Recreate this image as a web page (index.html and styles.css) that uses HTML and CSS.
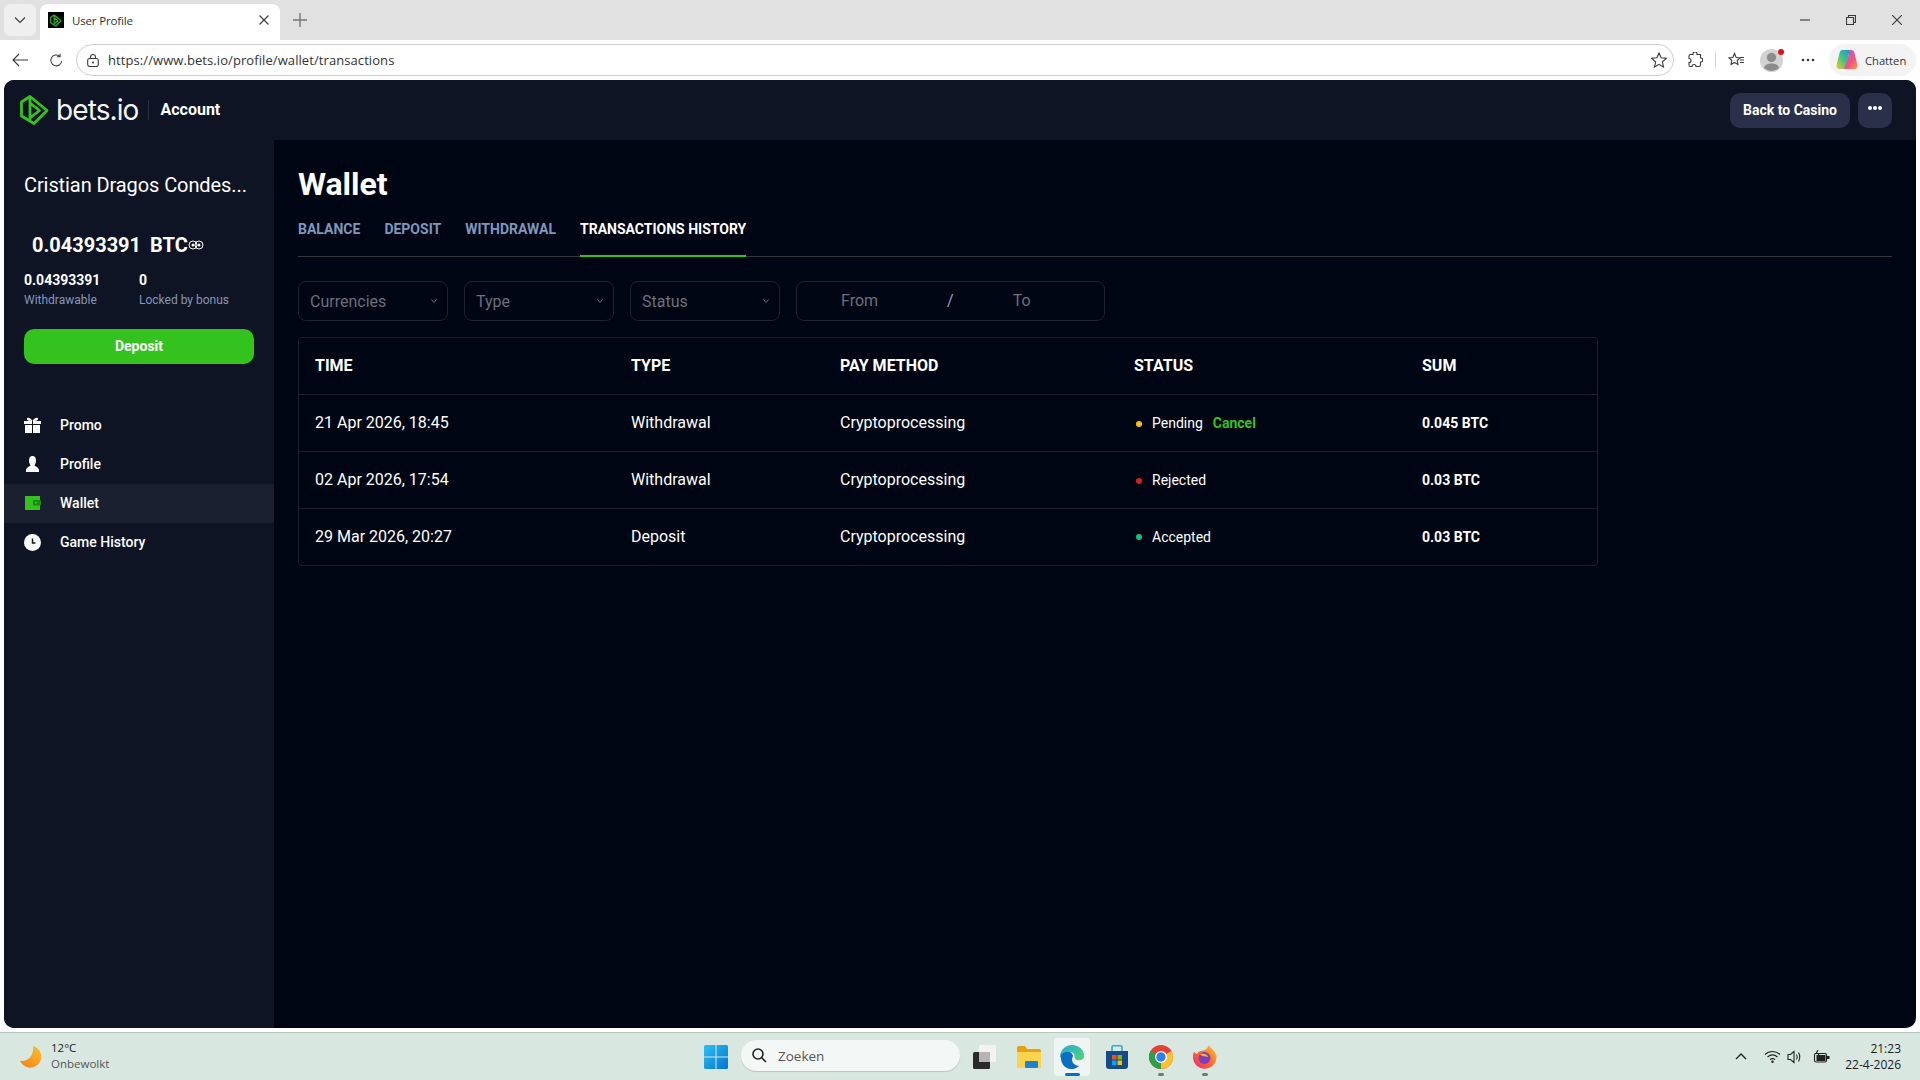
FILE: index.html
```html
<!DOCTYPE html>
<html lang="en">
<head>
<meta charset="utf-8">
<title>User Profile</title>
<link rel="stylesheet" href="styles.css">
</head>
<body>
<div class="tabstrip">
  <div class="tab-menu"><svg width="12" height="8" viewBox="0 0 12 8"><path d="M1 1.500 6 6.500 11 1.500" class="ic"/></svg></div>
  <div class="tab">
    <span class="favicon"><svg width="12" height="13" viewBox="0 0 29 32"><path d="M1.500 8V22L14 29.500 27 16.500 10 2.500ZM10 3V26M10 9 19.500 16.500 10 24" class="ic-green-s"/></svg></span>
    <span class="tab-title">User Profile</span>
    <svg class="tab-close" width="10" height="10" viewBox="0 0 10 10"><path d="M.5.5 9.500 9.500M9.500.5.5 9.500" class="ic"/></svg>
  </div>
  <svg class="tab-new" width="14" height="14" viewBox="0 0 14 14"><path d="M7 0V14M0 7H14" class="ic-grey"/></svg>
  <div class="winctl">
    <svg width="10" height="10" viewBox="0 0 10 10"><path d="M0 5H10" class="ic"/></svg>
    <svg width="10" height="10" viewBox="0 0 10 10"><path d="M.5 2.500H7.500V9.500H.5ZM2.500 2.500V.5H9.500V7.500H7.500" class="ic"/></svg>
    <svg width="10" height="10" viewBox="0 0 10 10"><path d="M0 0 10 10M10 0 0 10" class="ic"/></svg>
  </div>
</div>
<div class="toolbar">
  <svg class="tb-back" width="16" height="14" viewBox="0 0 16 14"><path d="M16 7H1M7 1 1 7 7 13" class="ic"/></svg>
  <svg class="tb-reload" width="15" height="15" viewBox="0 0 16 16"><path d="M13.500 8.500A5.800 5.800 0 1 1 11.500 3.500M11.800 .8V4H8.600" class="ic"/></svg>
  <div class="urlbar">
    <svg width="12" height="13" viewBox="0 0 12 13"><rect x=".7" y="4.500" width="10.600" height="8" rx="2" class="ic"/><path d="M3.500 4.500V3A2.500 2.500 0 0 1 8.500 3V4.500" class="ic"/><circle cx="6" cy="8.500" r="1" fill="#333"/></svg>
    <span class="url">https://www.bets.io/profile/wallet/transactions</span>
    <svg class="url-star" width="16" height="16" viewBox="0 0 16 16"><path d="M8 1 10.100 5.800 15.300 6.300 11.400 9.800 12.500 15 8 12.300 3.500 15 4.600 9.800 .7 6.300 5.900 5.800Z" class="ic"/></svg>
  </div>
  <svg class="tb-ext" width="16" height="16" viewBox="0 0 16 16"><path d="M6 1.500A2 2 0 0 1 10 2.500H13.500V6A2 2 0 0 1 14 10H13.500V13A1.500 1.500 0 0 1 12 14.500H9A2 2 0 0 0 5 14.500H3.500A1.500 1.500 0 0 1 2 13V10.500A2 2 0 0 0 2 6.500V4A1.500 1.500 0 0 1 3.500 2.500H6Z" class="ic"/></svg>
  <span class="tb-sep"></span>
  <svg class="tb-fav" width="17" height="16" viewBox="0 0 17 16"><path d="M6.500 1.500 8.200 5.500 12 5.900 9.200 8.500 10 12.500 6.500 10.500 3 12.500 3.800 8.500 1 5.900 4.800 5.500Z" class="ic"/><path d="M12 8H16M12 10.500H16M12 5.500H16" class="ic"/></svg>
  <span class="avatar"><svg width="23" height="23" viewBox="0 0 23 23"><circle cx="11.500" cy="11.500" r="11.500" fill="#d2d2d2"/><circle cx="11.500" cy="8.500" r="4.700" fill="#8c8c8c"/><path d="M4 19C5 15.500 8 14.500 11.500 14.500S18 15.500 19 19A11 11 0 0 1 4 19Z" fill="#8c8c8c"/></svg><i class="avatar-dot"></i></span>
  <svg class="tb-more" width="14" height="4" viewBox="0 0 14 4"><circle cx="2" cy="2" r="1.300" fill="#333"/><circle cx="7" cy="2" r="1.300" fill="#333"/><circle cx="12" cy="2" r="1.300" fill="#333"/></svg>
  <div class="chat">
    <svg width="22" height="22" viewBox="0 0 22 22"><defs><linearGradient id="cpa" x1="0" y1="1" x2="1" y2="0"><stop offset="0" stop-color="#ffc233"/><stop offset=".5" stop-color="#3cc77c"/><stop offset="1" stop-color="#1f8fe0"/></linearGradient><linearGradient id="cpb" x1="0" y1="0" x2="1" y2="1"><stop offset="0" stop-color="#b45bd9"/><stop offset=".6" stop-color="#f0567b"/><stop offset="1" stop-color="#ff9a3c"/></linearGradient></defs><path d="M6 1H14L9 20H4C1 20 0 18 .7 15.500L3.500 4C4 2 5 1 6 1Z" fill="url(#cpa)"/><path d="M13 1H15C17 1 18 2 18.500 4L21.300 15.500C22 18 21 20 18 20H8L13 5Z" fill="url(#cpb)"/></svg>
    <span>Chatten</span>
  </div>
</div>

<div class="page">
  <header class="site-head">
    <svg class="logo" width="29" height="32" viewBox="0 0 29 32"><path d="M1.500 8V22L14 29.500 27 16.500 10 2.500ZM10 3V26M10 9 19.500 16.500 10 24" class="logo-s"/></svg>
    <span class="brand">bets.io</span>
    <span class="head-sep"></span>
    <span class="head-title">Account</span>
    <div class="head-actions">
      <button class="btn-dark">Back to Casino</button>
      <button class="btn-more"><svg width="14" height="4" viewBox="0 0 14 4"><circle cx="2" cy="2" r="2" fill="#fff"/><circle cx="7" cy="2" r="2" fill="#fff"/><circle cx="12" cy="2" r="2" fill="#fff"/></svg></button>
    </div>
  </header>
  <div class="body">
    <aside class="side">
      <div class="user">Cristian Dragos Condes...</div>
      <div class="balance"><span>0.04393391</span><span class="bal-cur">BTC</span>
        <svg width="16" height="10" viewBox="0 0 16 10"><circle cx="5" cy="5" r="4" class="ic-white"/><circle cx="11" cy="5" r="4" class="ic-white"/><circle cx="5" cy="5" r="1.500" fill="#fff"/><circle cx="11" cy="5" r="1.500" fill="#fff"/></svg>
      </div>
      <div class="bal-split">
        <div class="bal-col"><b>0.04393391</b><small>Withdrawable</small></div>
        <div class="bal-col"><b>0</b><small>Locked by bonus</small></div>
      </div>
      <button class="btn-deposit">Deposit</button>
      <nav class="nav">
        <a class="nav-item"><svg width="17" height="16" viewBox="0 0 17 16"><path d="M0 4H8V7H0ZM9 4H17V7H9ZM1 8H8V16H1ZM9 8H16V16H9Z" fill="#fff"/><path d="M8.500 4C6 0 2.500 0 3 2.500 3.500 4 6 4 8.500 4 11 4 13.500 4 14 2.500 14.500 0 11 0 8.500 4Z" fill="#fff"/></svg><span>Promo</span></a>
        <a class="nav-item"><svg width="17" height="16" viewBox="0 0 17 16"><path d="M8.500 0C11 0 12 2 12 4.500 12 7 11 8 10.500 9.500 11 10.500 15 11 15 14.500V16H2V14.500C2 11 6 10.500 6.500 9.500 6 8 5 7 5 4.500 5 2 6 0 8.500 0Z" fill="#fff"/></svg><span>Profile</span></a>
        <a class="nav-item active"><svg width="17" height="16" viewBox="0 0 17 16"><path d="M1 1H16V15H1Z" fill="#34c21f"/><rect x="9" y="5" width="8" height="5.500" rx="1" fill="#1f8a12"/><rect x="11" y="7" width="2" height="1.500" fill="#34c21f"/></svg><span>Wallet</span></a>
        <a class="nav-item"><svg width="17" height="17" viewBox="0 0 17 17"><circle cx="8.500" cy="8.500" r="8.500" fill="#fff"/><path d="M8.500 4.500V9H11.500" class="ic-navy"/></svg><span>Game History</span></a>
      </nav>
    </aside>
    <main class="main">
      <h1 class="title">Wallet</h1>
      <div class="tabs">
        <a class="tabs-item">Balance</a>
        <a class="tabs-item">Deposit</a>
        <a class="tabs-item">Withdrawal</a>
        <a class="tabs-item current">Transactions history</a>
      </div>
      <div class="filters">
        <div class="select"><span>Currencies</span><svg width="6" height="4" viewBox="0 0 6 4"><path d="M.5.5 3 3.500 5.500.5" class="ic-dim"/></svg></div>
        <div class="select"><span>Type</span><svg width="6" height="4" viewBox="0 0 6 4"><path d="M.5.5 3 3.500 5.500.5" class="ic-dim"/></svg></div>
        <div class="select"><span>Status</span><svg width="6" height="4" viewBox="0 0 6 4"><path d="M.5.5 3 3.500 5.500.5" class="ic-dim"/></svg></div>
        <div class="daterange"><span class="d-from">From</span><span class="d-sep">/</span><span class="d-to">To</span></div>
      </div>
      <table class="tx">
        <colgroup><col class="c1"><col class="c2"><col class="c3"><col class="c4"><col class="c5"></colgroup>
        <thead><tr><th>TIME</th><th>TYPE</th><th>PAY METHOD</th><th>STATUS</th><th>SUM</th></tr></thead>
        <tbody>
          <tr><td>21 Apr 2026, 18:45</td><td>Withdrawal</td><td>Cryptoprocessing</td><td class="st"><i class="dot pending"></i>Pending<a class="cancel">Cancel</a></td><td class="sum">0.045 BTC</td></tr>
          <tr><td>02 Apr 2026, 17:54</td><td>Withdrawal</td><td>Cryptoprocessing</td><td class="st"><i class="dot rejected"></i>Rejected</td><td class="sum">0.03 BTC</td></tr>
          <tr><td>29 Mar 2026, 20:27</td><td>Deposit</td><td>Cryptoprocessing</td><td class="st"><i class="dot accepted"></i>Accepted</td><td class="sum">0.03 BTC</td></tr>
        </tbody>
      </table>
    </main>
  </div>
</div>

<footer class="taskbar">
  <div class="tb-left">
    <svg width="24" height="24" viewBox="0 0 24 24"><defs><linearGradient id="moon" x1="1" y1="0" x2="0" y2="1"><stop offset="0" stop-color="#fbc02d"/><stop offset="1" stop-color="#f57f17"/></linearGradient></defs><path d="M14 1A11 11 0 1 1 1 15.500C7 17.500 15.500 12 14 1Z" fill="url(#moon)"/></svg>
    <div class="weather"><span>12°C</span><span class="w-sub">Onbewolkt</span></div>
  </div>
  <div class="tb-center">
    <svg class="win" width="24" height="24" viewBox="0 0 24 24"><defs><linearGradient id="wn" x1="0" y1="0" x2="1" y2="1"><stop offset="0" stop-color="#2cc1f5"/><stop offset="1" stop-color="#0672cf"/></linearGradient></defs><path d="M0 1.500Q0 0 1.500 0H11.500V11.500H0ZM12.500 0H22.500Q24 0 24 1.500V11.500H12.500ZM0 12.500H11.500V24H1.500Q0 24 0 22.500ZM12.500 12.500H24V22.500Q24 24 22.500 24H12.500Z" fill="url(#wn)"/></svg>
    <div class="search"><svg width="15" height="15" viewBox="0 0 15 15"><circle cx="6" cy="6" r="5" class="ic-search"/><path d="M9.700 9.700 14 14" class="ic-search"/></svg><span>Zoeken</span></div>
    <svg class="app app-task" width="24" height="24" viewBox="0 0 24 24"><rect x="0" y="7" width="17" height="17" rx="1.500" fill="#2a2a2a"/><rect x="6" y="0" width="17" height="17" rx="1.500" fill="#f3f3f3"/><rect x="6" y="7" width="11" height="10" fill="#b5b5b5"/></svg>
    <svg class="app app-files" width="24" height="22" viewBox="0 0 24 22"><path d="M0 2Q0 0 2 0H8L10 3H22Q24 3 24 5V20Q24 22 22 22H2Q0 22 0 20Z" fill="#e3a20f"/><path d="M0 6H24V20Q24 22 22 22H2Q0 22 0 20Z" fill="#fcd34d"/><rect x="8" y="15" width="13" height="7" rx="1" fill="#1f7fd1"/></svg>
    <div class="app-active"><svg width="24" height="24" viewBox="0 0 24 24"><defs><linearGradient id="edg" x1="0" y1="0" x2="1" y2="1"><stop offset="0" stop-color="#2aa5e0"/><stop offset="1" stop-color="#50d96c"/></linearGradient></defs><path d="M12 0C19 0 24 5 24 11 24 15 20 16 17 15 14 14 15 11 14 9 12 6 5 8 4 12 1 14 0 12 0 11 1 4 6 0 12 0Z" fill="url(#edg)"/><path d="M1 10C3 6 12 5 13 11 11 15 12 20 19 21 16 23.500 14 24 11.500 24 4 24 0 17 1 10Z" fill="#0a6ec2"/></svg><i class="app-bar"></i></div>
    <svg class="app app-store" width="24" height="24" viewBox="0 0 24 24"><path d="M7 6V2Q7 .8 8.500 .8H15.500Q17 .8 17 2V6" class="ic-store"/><path d="M1 6H23V21Q23 24 20 24H4Q1 24 1 21Z" fill="#164a85"/><rect x="7" y="10" width="4.500" height="4.500" fill="#f25022"/><rect x="12.500" y="10" width="4.500" height="4.500" fill="#7fba00"/><rect x="7" y="15.500" width="4.500" height="4.500" fill="#00a4ef"/><rect x="12.500" y="15.500" width="4.500" height="4.500" fill="#ffb900"/></svg>
    <div class="app-run"><svg width="24" height="24" viewBox="0 0 24 24"><circle cx="12" cy="12" r="12" fill="#e34133"/><path d="M12 12 22.400 6A12 12 0 0 1 12 24Z" fill="#fbc02d"/><path d="M12 12 12 24A12 12 0 0 1 1.600 6Z" fill="#2e9e48"/><circle cx="12" cy="12" r="6" fill="#fff"/><circle cx="12" cy="12" r="4.700" fill="#2f80ed"/></svg><i class="app-dot"></i></div>
    <div class="app-run"><svg width="24" height="24" viewBox="0 0 24 24"><defs><linearGradient id="ffx" x1="1" y1="0" x2="0" y2="1"><stop offset="0" stop-color="#ffcb2e"/><stop offset=".5" stop-color="#ff6a2c"/><stop offset="1" stop-color="#e8267a"/></linearGradient></defs><path d="M16 0C17 3 22 5 23.500 11A11.800 11.800 0 1 1 1 7L4 9C6 5 10 6 12 5 14 4 15 2 16 0Z" fill="url(#ffx)"/><circle cx="11.500" cy="13" r="6" fill="#7c3fb8"/><path d="M7 9C10 8 15 9 15 12 12 11 9 12 7 9Z" fill="#ffb02e"/></svg><i class="app-dot"></i></div>
  </div>
  <div class="tb-right">
    <svg class="tray-up" width="12" height="7" viewBox="0 0 12 7"><path d="M1 6 6 1 11 6" class="ic-tray"/></svg>
    <svg class="tray-wifi" width="17" height="13" viewBox="0 0 17 13"><path d="M1 4.500C5 .5 12 .5 16 4.500M3.500 7C6.500 4.500 10.500 4.500 13.500 7M6 9.500C7.500 8.500 9.500 8.500 11 9.500" class="ic-tray-thin"/><circle cx="8.500" cy="11.700" r="1.200" fill="#222"/></svg>
    <svg class="tray-vol" width="16" height="14" viewBox="0 0 16 14"><path d="M1 4.500H3.500L7 1.500V12.500L3.500 9.500H1ZM9.500 4.500Q11 7 9.500 9.500M11.500 2.500Q14 7 11.500 11.500" class="ic-tray-thin"/></svg>
    <svg class="tray-batt" width="17" height="13" viewBox="0 0 17 13"><rect x="1.500" y="3.500" width="12" height="8.500" rx="1.500" class="ic-tray-thin"/><rect x="3.500" y="5" width="9" height="6" fill="#222"/><rect x="14" y="6" width="2.500" height="3" fill="#222"/><path d="M5 0 3 3.500H6L4.500 6.500" class="ic-tray-thin"/></svg>
    <div class="clock"><span>21:23</span><span>22-4-2026</span></div>
  </div>
</footer>
</body>
</html>
```
FILE: styles.css
```css
* { box-sizing: border-box; }
html, body { margin: 0; height: 100%; }
body { width: 1920px; height: 1080px; overflow: hidden; background: #fff; display: flex; flex-direction: column; font-family: Roboto, "Liberation Sans", sans-serif; color: #fff; }

.ic { fill: none; stroke: #3a3a3a; stroke-width: 1.1; }
.ic-grey { fill: none; stroke: #777; stroke-width: 1.4; }
.ic-green-s { fill: none; stroke: #2fae1e; stroke-width: 3; stroke-linejoin: round; }
.ic-white { fill: none; stroke: #fff; stroke-width: 1; }
.ic-navy { fill: none; stroke: #0e1424; stroke-width: 1.5; }
.ic-dim { fill: none; stroke: #6a707c; stroke-width: 1; }
.ic-search { fill: none; stroke: #222; stroke-width: 1.6; }
.ic-store { fill: none; stroke: #2aa8e0; stroke-width: 1.6; }
.ic-tray { fill: none; stroke: #222; stroke-width: 1.4; }
.ic-tray-thin { fill: none; stroke: #222; stroke-width: 1.1; }

/* browser chrome */
.tabstrip { height: 40px; flex: none; background: #e1e1e1; display: flex; align-items: flex-end; padding-left: 4px; }
.tab-menu { width: 32px; height: 32px; margin-bottom: 4px; background: #efefef; border-radius: 6px; display: flex; align-items: center; justify-content: center; }
.tab { width: 240px; height: 36px; margin-left: 4px; background: #fff; border-radius: 8px 8px 0 0; display: flex; align-items: center; padding: 0 0 4px 8px; }
.favicon { width: 16px; height: 16px; background: #000; display: flex; align-items: center; justify-content: center; }
.tab-title { margin-left: 8px; font: 11.500px "Open Sans", sans-serif; letter-spacing: -.15px; color: #333; flex: 1; }
.tab-close { margin-right: 11px; }
.tab-new { margin: 0 0 13px 13px; }
.winctl { margin-left: auto; height: 40px; padding: 15px 18px 0 0; display: flex; gap: 36px; }
.toolbar { height: 40px; flex: none; background: #fff; display: flex; align-items: center; padding-left: 12px; }
.tb-reload { margin-left: 21px; }
.urlbar { width: 1598px; height: 32px; margin-left: 12px; border: 1px solid #cfcfcf; border-radius: 16px; display: flex; align-items: center; padding: 0 6px 0 10px; }
.url { margin-left: 9px; font: 13px "Open Sans", sans-serif; color: #333; letter-spacing: .08px; }
.url-star { margin-left: auto; }
.tb-ext { margin-left: 13px; }
.tb-sep { width: 1px; height: 16px; background: #d5d5d5; margin-left: 12px; }
.tb-fav { margin-left: 12px; }
.avatar { position: relative; display: block; width: 23px; height: 23px; margin-left: 15px; }
.avatar svg { display: block; }
.avatar-dot { position: absolute; right: -1px; top: 0; width: 6px; height: 6px; border-radius: 50%; background: #e0101c; }
.tb-more { margin-left: 18px; }
.chat { width: 87px; height: 32px; margin-left: 14px; background: #f3f3f3; border-radius: 16px; display: flex; align-items: center; padding-left: 7px; gap: 7px; font: 11.200px "Open Sans", sans-serif; color: #333; }

/* page */
.page { width: 1912px; height: 948px; margin: 0 4px; flex: none; background: #000514; border-radius: 10px; overflow: hidden; display: flex; flex-direction: column; }
.site-head { height: 60px; flex: none; background: #0e1424; display: flex; align-items: center; padding-left: 16px; }
.brand { margin-left: 7px; font: 400 28px Inter, sans-serif; letter-spacing: -.9px; color: #f4f4f4; }
.logo-s { fill: none; stroke: #34c21f; stroke-width: 2.800; stroke-linejoin: round; }
.head-sep { width: 1px; height: 20px; background: #2a3049; margin-left: 10px; }
.head-title { margin-left: 11px; margin-bottom: 1px; font-weight: 700; font-size: 16px; }
.head-actions { margin-left: auto; margin-right: 24px; display: flex; gap: 8px; margin-top: 1px; }
.head-actions button { border: 0; border-radius: 10px; background: #2a3049; color: #fff; height: 35px; font: 700 14px Roboto, sans-serif; }
.btn-dark { width: 120px; padding: 0 0 2px; }
.btn-more { width: 34px; padding: 0 0 12px; }
.body { flex: 1; display: flex; min-height: 0; }
.side { width: 270px; flex: none; background: #0e1424; padding: 0 20px; }
.user { margin-top: 31px; font-size: 20px; font-weight: 400; line-height: 28px; white-space: nowrap; letter-spacing: -.09px; }
.balance { margin: 32px 0 0 8px; display: flex; align-items: center; font-size: 20px; font-weight: 700; line-height: 28px; }
.bal-cur { margin-left: 9px; }
.bal-split { margin-top: 11px; display: flex; }
.bal-col { width: 115px; display: flex; flex-direction: column; }
.bal-col b { font-size: 14px; line-height: 20px; font-weight: 700; }
.bal-col small { font-size: 12px; line-height: 20px; color: #8597b8; }
.btn-deposit { display: block; width: 230px; height: 35px; margin-top: 19px; padding: 0 0 2px; border: 0; border-radius: 10px; background: #34c21f; color: #fff; font: 700 14px Roboto, sans-serif; }
.nav { margin: 42px -20px 0; display: flex; flex-direction: column; }
.nav-item { height: 39px; display: flex; align-items: center; padding: 0 0 1px 20px; font-size: 14px; font-weight: 500; }
.nav-item svg { width: 17px; flex: none; }
.nav-item span { margin-left: 19px; }
.nav-item.active { background: #1b2030; }

.main { flex: 1; padding: 0 24px; min-width: 0; }
.title { margin: 25px 0 0; font-size: 32px; line-height: 38px; font-weight: 700; }
.tabs { margin-top: 16px; height: 38px; border-bottom: 1px solid #35373f; display: flex; gap: 24px; }
.tabs-item { height: 38px; padding-top: 0; text-transform: uppercase; font-size: 14px; font-weight: 700; line-height: 20px; color: #7f97bd; }
.tabs-item.current { color: #fff; border-bottom: 2px solid #34c21f; }
.filters { margin-top: 24px; display: flex; gap: 16px; }
.select { width: 150px; height: 40px; border: 1px solid #1f232f; border-radius: 8px; display: flex; align-items: center; padding: 0 10px 0 11px; font-size: 16px; color: #6a707c; }
.select svg { margin-left: auto; }
.daterange { width: 309px; height: 40px; border: 1px solid #1f232f; border-radius: 8px; display: flex; align-items: center; padding-left: 44px; font-size: 16px; color: #6a707c; padding-bottom: 2px; }
.d-sep { margin-left: 69px; color: #8fa6cc; }
.d-to { margin-left: 59px; }
.tx { margin-top: 16px; width: 1300px; table-layout: fixed; border-collapse: separate; border-spacing: 0; border: 1px solid #1b1f2c; border-radius: 4px; }
.c1 { width: 316px; } .c2 { width: 209px; } .c3 { width: 294px; } .c4 { width: 288px; }
.tx th, .tx td { height: 57px; padding: 0 0 2px 16px; text-align: left; border-bottom: 1px solid #1b1f2c; font-size: 16px; font-weight: 400; }
.tx th { font-weight: 700; }
.tx tbody tr:last-child td { height: 56px; border-bottom: 0; padding-bottom: 1px; }
.tx .st { font-size: 14px; font-weight: 400; padding-bottom: 0; }
.tx .sum { font-size: 14px; font-weight: 700; padding-bottom: 0; }
.dot { display: inline-block; width: 6px; height: 6px; border-radius: 50%; margin: 0 10px 1px 2px; vertical-align: middle; }
.pending { background: #ffc107; } .rejected { background: #d32318; } .accepted { background: #0fc27b; }
.cancel { margin-left: 10px; font-weight: 700; color: #34c21f; }

/* taskbar */
.taskbar { margin-top: 4px; height: 48px; flex: none; background: #d8e8e1; border-top: 1px solid #b9c4bf; display: grid; grid-template-columns: 704px 1fr auto; align-items: center; font: 11.500px "Open Sans", sans-serif; color: #1c1c1c; }
.tb-left { display: flex; align-items: center; padding-left: 19px; gap: 8px; }
.weather { display: flex; flex-direction: column; line-height: 16px; margin-bottom: 1px; }
.w-sub { color: #555; }
.tb-center { display: flex; align-items: center; }
.win { flex: none; }
.search { width: 219px; height: 31px; margin: 0 0 2px 13px; background: #f3f8f6; border-radius: 16px; box-shadow: 0 1px 1px #b9c4bf; display: flex; align-items: center; padding-left: 11px; gap: 11px; font-size: 13.500px; color: #555; }
.app { flex: none; }
.app-task { margin-left: 13px; }
.app-files { margin-left: 20px; }
.app-active { position: relative; width: 36px; height: 38px; margin-left: 13px; background: #eef5f2; border-radius: 4px; display: flex; align-items: center; justify-content: center; }
.app-bar { position: absolute; left: 11px; bottom: 0; width: 15px; height: 3px; border-radius: 2px; background: #0a6ec2; }
.app-store { margin-left: 15px; }
.app-run { position: relative; width: 24px; height: 24px; margin-left: 20px; }
.app-run svg { display: block; }
.app-dot { position: absolute; left: 9px; top: 28px; width: 6px; height: 3px; border-radius: 2px; background: #777; }
.tb-right { display: flex; align-items: center; padding-right: 19px; }
.tray-wifi { margin-left: 17px; }
.tray-vol { margin-left: 6px; }
.tray-batt { margin-left: 10px; }
.clock { margin-left: 15px; display: flex; flex-direction: column; align-items: flex-end; line-height: 16px; font-size: 12px; }
```
